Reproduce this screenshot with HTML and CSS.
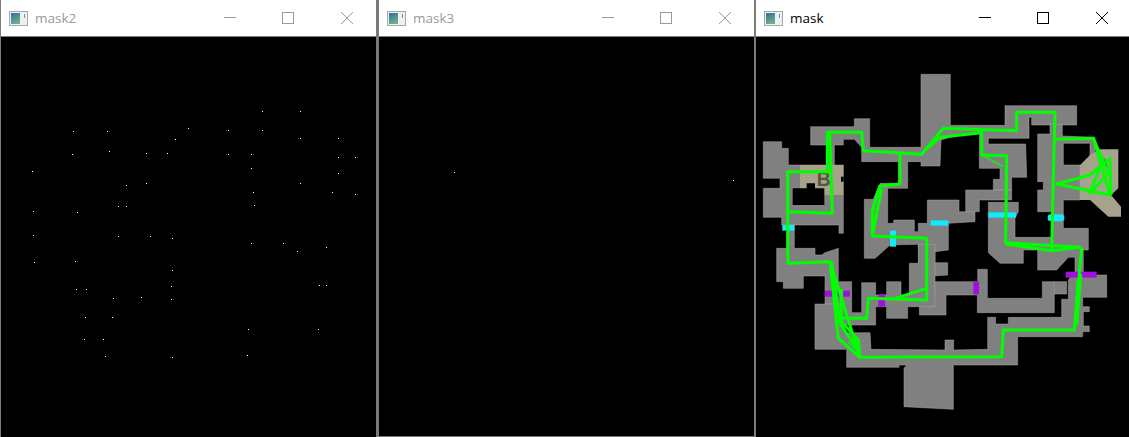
FILE: index.html
```html
<!DOCTYPE html>
<html lang="en">
<head>
    <meta charset="UTF-8">
    <title>mask windows</title>
    <link rel="stylesheet" href="styles.css">
</head>
<body>
    <svg class="defs" width="0" height="0">
        <defs>
            <linearGradient id="panel" x1="0" y1="0" x2="0.4" y2="1">
                <stop offset="0" stop-color="#2f6f9f"/>
                <stop offset="1" stop-color="#6cb08a"/>
            </linearGradient>
        </defs>
        <symbol id="win-icon" viewBox="0 0 19 15">
            <rect x="0.5" y="0.5" width="18" height="14" fill="#eef0f2" stroke="#a3a7ab"/>
            <rect x="2" y="2" width="9" height="11" fill="url(#panel)"/>
            <rect x="15" y="3" width="1" height="4" fill="#5b93b5"/>
        </symbol>
        <symbol id="win-min" viewBox="0 0 12 12"><path d="M0 5.5h12" stroke="currentColor" fill="none"/></symbol>
        <symbol id="win-max" viewBox="0 0 12 12"><rect x="0.5" y="0.5" width="11" height="11" stroke="currentColor" fill="none"/></symbol>
        <symbol id="win-close" viewBox="0 0 12 12"><path d="M0 0L12 12M12 0L0 12" stroke="currentColor" fill="none"/></symbol>
    </svg>

    <div class="window window-first">
        <div class="title-bar">
            <svg class="app-icon"><use href="#win-icon"/></svg>
            <span class="title">mask2</span>
            <div class="controls">
                <span class="control"><svg><use href="#win-min"/></svg></span>
                <span class="control"><svg><use href="#win-max"/></svg></span>
                <span class="control"><svg><use href="#win-close"/></svg></span>
            </div>
        </div>
        <div class="canvas">
            <svg class="view" width="375" height="400" viewBox="1 37 375 400">
                <!-- single white pixels, page coordinates -->
                <path class="dots" d="M73 131h1v1h-1z M107 131h1v1h-1z M188 128h1v1h-1z M175 139h1v1h-1z M72 154h1v1h-1z M109 151h1v1h-1z M146 153h1v1h-1z M167 153h1v1h-1z M32 171h1v1h-1z M126 185h1v1h-1z M146 183h1v1h-1z M118 206h1v1h-1z M126 206h1v1h-1z M33 211h1v1h-1z M77 212h1v1h-1z
                    M262 111h1v1h-1z M300 111h1v1h-1z M228 130h1v1h-1z M262 130h1v1h-1z M300 138h1v1h-1z M338 138h1v1h-1z M228 154h1v1h-1z M251 154h1v1h-1z M338 157h1v1h-1z M355 157h1v1h-1z M251 168h1v1h-1z M338 173h1v1h-1z M300 183h1v1h-1z M253 192h1v1h-1z M332 192h1v1h-1z M355 194h1v1h-1z M254 205h1v1h-1z
                    M33 235h1v1h-1z M118 236h1v1h-1z M150 236h1v1h-1z M172 238h1v1h-1z M34 262h1v1h-1z M75 261h1v1h-1z M172 270h1v1h-1z M76 289h1v1h-1z M86 289h1v1h-1z M171 286h1v1h-1z M171 299h1v1h-1z M113 298h1v1h-1z M141 297h1v1h-1z M85 317h1v1h-1z M112 317h1v1h-1z M84 339h1v1h-1z M103 339h1v1h-1z M105 356h1v1h-1z M172 357h1v1h-1z
                    M251 243h1v1h-1z M283 243h1v1h-1z M297 251h1v1h-1z M326 247h1v1h-1z M319 285h1v1h-1z M326 285h1v1h-1z M248 329h1v1h-1z M318 329h1v1h-1z M247 355h1v1h-1z"/>
            </svg>
        </div>
    </div>

    <div class="window window-second">
        <div class="title-bar">
            <svg class="app-icon"><use href="#win-icon"/></svg>
            <span class="title">mask3</span>
            <div class="controls">
                <span class="control"><svg><use href="#win-min"/></svg></span>
                <span class="control"><svg><use href="#win-max"/></svg></span>
                <span class="control"><svg><use href="#win-close"/></svg></span>
            </div>
        </div>
        <div class="canvas">
            <svg class="view" width="375" height="399" viewBox="379 37 375 399">
                <path class="dots" d="M454 172h1v1h-1z M733 180h1v1h-1z"/>
            </svg>
        </div>
    </div>

    <div class="window window-active">
        <div class="title-bar">
            <svg class="app-icon"><use href="#win-icon"/></svg>
            <span class="title">mask</span>
            <div class="controls">
                <span class="control"><svg><use href="#win-min"/></svg></span>
                <span class="control"><svg><use href="#win-max"/></svg></span>
                <span class="control"><svg><use href="#win-close"/></svg></span>
            </div>
        </div>
        <div class="canvas">
            <!-- units are 1/3 px, origin at x=755 y=60 -->
            <svg class="view" width="373" height="400" viewBox="3 -69 1119 1200">
                <g class="floor">
                    <polygon points="25,245 80,245 80,265 100,265 100,315 265,315 265,495 265,520 252,520 252,495 118,495 80,495 80,472 25,472 25,385 75,385 75,355 25,355"/>
                    <polygon points="167,200 298,200 298,176 344,176 344,262 498,262 498,43 586,43 586,196 750,196 750,137 965,137 965,195 830,195 830,172 822,172 822,235 700,235 700,252 812,252 815,352 770,352 770,390 715,390 715,358 735,358 735,325 673,325 673,218 620,222 558,240 555,318 498,318 498,305 458,305 458,385 375,385 375,370 430,370 430,305 320,305 320,262 298,238 265,238 265,255 238,255 238,320 215,320 215,255 167,255"/>
                    <polygon points="632,390 770,390 770,420 673,420 673,455 632,455"/>
                    <polygon points="328,418 355,418 372,375 398,385 398,490 416,490 416,480 478,480 478,515 490,515 490,490 517,490 517,420 612,420 612,455 660,455 660,485 580,490 580,570 540,575 540,608 578,608 578,645 535,648 535,665 668,665 668,628 697,628 697,715 862,715 862,665 898,665 898,758 667,758 667,705 573,705 573,765 493,765 493,740 490,553 405,555 360,595 328,595"/>
                    <polygon points="100,495 118,495 118,565 180,565 180,585 200,585 210,578 250,565 250,665 290,665 290,758 320,758 320,668 362,668 362,705 395,705 395,665 438,665 438,705 463,705 463,610 490,610 490,553 540,553 540,740 458,740 458,775 395,775 395,740 362,740 362,795 265,795 250,732 210,732 210,648 145,648 145,685 85,685 85,665 65,665 65,565 100,565"/>
                    <polygon points="898,665 935,665 935,702 898,702"/>
                    <polygon points="700,427 790,427 790,455 780,475 780,532 890,532 890,455 848,455 848,390 865,390 865,365 848,365 848,222 885,222 885,190 922,195 922,228 1020,232 1020,290 1005,290 1005,250 925,250 925,315 975,315 975,420 925,420 925,505 1000,505 1000,570 985,570 985,645 1055,645 1055,712 983,712 983,740 1003,740 1003,755 985,755 985,798 1003,798 1003,815 983,815 983,830 788,830 788,915 595,915 595,1048 447,1040 447,925 455,915 432,915 432,922 275,922 275,868 180,868 180,732 255,732 270,818 345,818 348,868 570,870 570,840 596,840 596,870 698,868 698,772 722,772 722,792 760,792 760,772 920,772 920,718 940,718 940,660 960,635 960,592 940,592 905,630 848,630 848,570 805,570 805,610 735,610 700,578"/>
                </g>
                <g class="sand">
                    <rect x="135" y="315" width="130" height="90"/>
                    <polygon points="975,315 1005,285 1035,268 1090,268 1090,385 1068,405 1098,440 1098,470 1060,470 1005,420 975,420"/>
                </g>
                <g class="void">
                    <polygon points="113,385 155,385 155,370 180,370 180,385 208,385 208,435 113,435"/>
                    <rect x="258" y="350" width="8" height="15"/>
                </g>
                <text class="site-label" x="185" y="378">B</text>
                <text class="site-label site-label-small" x="1030" y="322">A</text>
                <g class="door-cyan">
                    <rect x="82" y="495" width="36" height="17"/>
                    <rect x="405" y="512" width="18" height="48"/>
                    <rect x="527" y="481" width="53" height="16"/>
                    <rect x="700" y="457" width="83" height="16"/>
                    <rect x="878" y="463" width="50" height="21" rx="10"/>
                </g>
                <g class="door-purple">
                    <rect x="210" y="692" width="75" height="18"/>
                    <rect x="370" y="702" width="20" height="38"/>
                    <rect x="655" y="665" width="17" height="38"/>
                    <rect x="932" y="635" width="93" height="18"/>
                </g>
                <g class="track">
                    <polyline points="98,570 98,335 225,335"/>
                    <polyline points="217,340 217,217 320,217 325,272 500,283 565,205 785,212 785,157 900,157 895,350 890,570"/>
                    <polyline points="224,217 232,460 100,455"/>
                    <polyline points="435,283 435,372 375,378 352,450 352,528 515,535 515,720 340,715 335,775 258,775 260,692 245,690"/>
                    <polyline points="680,212 680,285 755,287 752,548 860,555 978,562"/>
                    <polyline points="752,552 890,572 975,562"/>
                    <polyline points="900,238 1015,235 1065,405 905,372 1005,345 1065,295 1068,405"/>
                    <polyline points="1015,235 1060,340 1005,400 1045,295"/>
                    <polyline points="98,570 100,610 225,605 250,835 315,892 740,890 745,810 958,810 980,562"/>
                    <polyline points="225,605 315,892 310,840 250,775"/>
                    <polyline points="230,605 255,790 312,875"/>
                    <polyline points="420,715 515,685"/>
                    <polyline points="510,270 555,232 680,218"/>
                    <polyline points="352,528 380,385"/>
                    <polygon points="965,660 982,640 970,790 955,810"/>
                </g>
                <g class="track-thin">
                    <polyline points="352,450 365,445 352,510 372,420"/>
                    <polyline points="690,290 745,320"/>
                    <polyline points="265,845 300,880"/>
                    <polyline points="280,845 310,875"/>
                </g>
            </svg>
        </div>
    </div>
</body>
</html>
```

FILE: styles.css
```css
body {
    margin: 0;
    width: 1129px;
    height: 437px;
    display: flex;
    overflow: hidden;
    background-color: #000000;
    font-family: "Open Sans", "Noto Sans", sans-serif;
}

.defs {
    flex: none;
    width: 0;
    height: 0;
}

.window {
    display: flex;
    flex-direction: column;
    flex: none;
    height: 437px;
    box-sizing: border-box;
    color: #999999;
}

.window-first {
    width: 378px;
    border-left: 1px solid #7a7a7a;
    border-right: 2px solid #7a7a7a;
}

.window-second {
    width: 377px;
    border-left: 1px solid #7a7a7a;
    border-right: 1px solid #7a7a7a;
    border-bottom: 1px solid #7a7a7a;
}

.window-active {
    width: 374px;
    border-left: 1px solid #7a7a7a;
    color: #000000;
}

.title-bar {
    display: flex;
    align-items: center;
    flex: none;
    height: 36px;
    padding-left: 8px;
    background-color: #ffffff;
    border-bottom: 1px solid #7f7f7f;
    box-sizing: content-box;
}

.app-icon {
    width: 19px;
    height: 15px;
    flex: none;
}

.title {
    margin-left: 7px;
    font-size: 13.5px;
}

.controls {
    display: flex;
    margin-left: auto;
}

.window-active .controls {
    margin-right: -2px;
}

.control {
    display: flex;
    align-items: center;
    justify-content: center;
    width: 58.5px;
    height: 36px;
}

.control svg {
    width: 12px;
    height: 12px;
}

.canvas {
    flex: 1;
    min-height: 0;
    background-color: #000000;
}

.view {
    display: block;
}

.dots {
    fill: #ffffff;
    shape-rendering: crispEdges;
}

.floor polygon {
    fill: #808080;
    stroke: #a9a9a4;
    stroke-width: 1.5;
}

.sand {
    fill: #a6a38c;
}

.void {
    fill: #000000;
}

.site-label {
    font-family: "Liberation Sans", sans-serif;
    font-weight: bold;
    font-size: 58px;
    fill: #57543f;
}

.site-label-small {
    font-size: 40px;
}

.door-cyan {
    fill: #14e8fb;
}

.door-purple {
    fill: #a20fdc;
}

.track polyline {
    fill: none;
    stroke: #00ff00;
    stroke-width: 9;
    stroke-linejoin: round;
}

.track polygon {
    fill: #00ff00;
}

.track-thin polyline {
    fill: none;
    stroke: #00ff00;
    stroke-width: 4;
}
```
